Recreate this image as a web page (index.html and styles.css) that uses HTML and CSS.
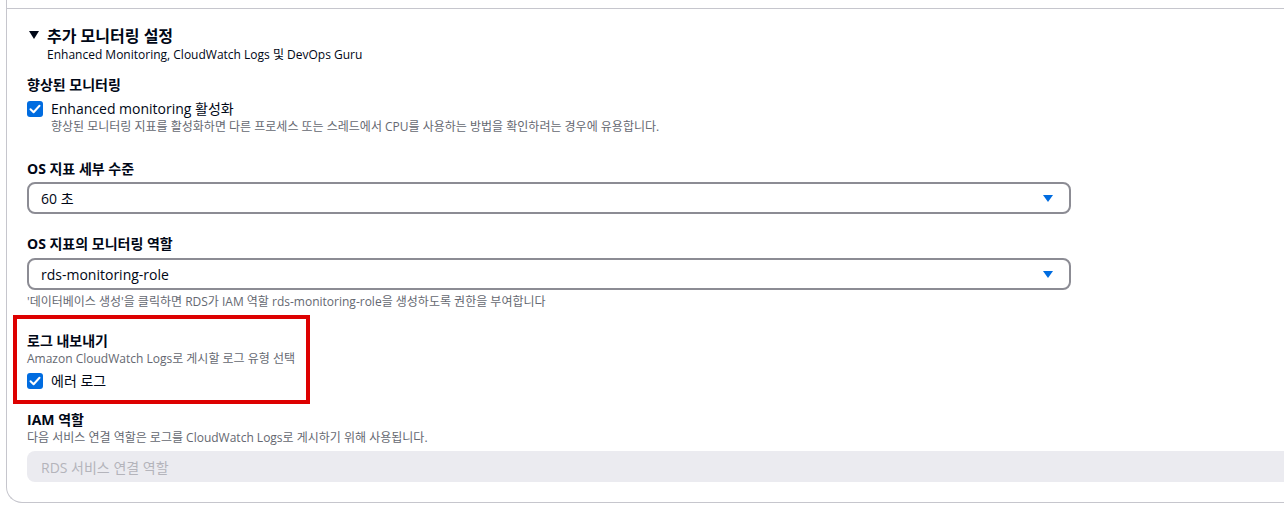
FILE: index.html
```html
<!DOCTYPE html>
<html lang="ko">
<head>
<meta charset="utf-8">
<link rel="stylesheet" href="styles.css">
</head>
<body>
<div class="card">
  <div class="section">
    <div class="exp-header">
      <svg class="exp-caret" width="10" height="8" viewBox="0 0 10 8"><polygon points="0,0 10,0 5,8" fill="#000716"/></svg>
      <div>
        <div class="exp-title">추가 모니터링 설정</div>
        <div class="exp-sub">Enhanced Monitoring, CloudWatch Logs 및 DevOps Guru</div>
      </div>
    </div>

    <div class="field f-enh">
      <div class="label">향상된 모니터링</div>
      <div class="check-row">
        <svg class="cbox" width="16" height="16" viewBox="0 0 16 16"><rect x="0" y="0" width="16" height="16" rx="3" fill="#006ce0"/><polyline points="3.5,8.2 6.6,11.2 12.5,4.8" fill="none" stroke="#fff" stroke-width="2" stroke-linecap="round" stroke-linejoin="round"/></svg>
        <span class="check-label">Enhanced monitoring 활성화</span>
      </div>
      <div class="check-desc">향상된 모니터링 지표를 활성화하면 다른 프로세스 또는 스레드에서 CPU를 사용하는 방법을 확인하려는 경우에 유용합니다.</div>
    </div>

    <div class="field f-gran">
      <div class="label">OS 지표 세부 수준</div>
      <div class="select">
        <span>60 초</span>
        <svg width="10" height="7" viewBox="0 0 10 7"><polygon points="0,0 10,0 5,7" fill="#006ce0"/></svg>
      </div>
    </div>

    <div class="field f-role">
      <div class="label">OS 지표의 모니터링 역할</div>
      <div class="select">
        <span>rds-monitoring-role</span>
        <svg width="10" height="7" viewBox="0 0 10 7"><polygon points="0,0 10,0 5,7" fill="#006ce0"/></svg>
      </div>
      <div class="hint">'데이터베이스 생성'을 클릭하면 RDS가 IAM 역할 rds-monitoring-role을 생성하도록 권한을 부여합니다</div>
    </div>

    <div class="field f-logs">
      <div class="highlight"></div>
      <div class="label">로그 내보내기</div>
      <div class="desc">Amazon CloudWatch Logs로 게시할 로그 유형 선택</div>
      <div class="check-row">
        <svg class="cbox" width="16" height="16" viewBox="0 0 16 16"><rect x="0" y="0" width="16" height="16" rx="3" fill="#006ce0"/><polyline points="3.5,8.2 6.6,11.2 12.5,4.8" fill="none" stroke="#fff" stroke-width="2" stroke-linecap="round" stroke-linejoin="round"/></svg>
        <span class="check-label">에러 로그</span>
      </div>
    </div>

    <div class="field f-iam">
      <div class="label">IAM 역할</div>
      <div class="desc">다음 서비스 연결 역할은 로그를 CloudWatch Logs로 게시하기 위해 사용됩니다.</div>
      <div class="input-disabled">RDS 서비스 연결 역할</div>
    </div>
  </div>
</div>
</body>
</html>
```

FILE: styles.css
```css
html, body {
  margin: 0;
  padding: 0;
  background: #ffffff;
  overflow: hidden;
}
body {
  width: 1284px;
  height: 514px;
  font-family: "Open Sans", "Noto Sans CJK KR", sans-serif;
  color: #000716;
}
.card {
  margin-left: 6px;
  width: 1340px;
  height: 503px;
  border-left: 1px solid #c6c6cd;
  border-bottom: 1px solid #c6c6cd;
  border-bottom-left-radius: 16px;
  box-sizing: border-box;
  padding-top: 8px;
}
.section {
  border-top: 1px solid #c6c6cd;
  padding: 17px 0 0 20px;
  display: flex;
  flex-direction: column;
}
.exp-header {
  display: flex;
  align-items: flex-start;
  gap: 8px;
  padding-left: 2px;
}
.exp-caret {
  margin-top: 5px;
}
.exp-title {
  font-size: 16px;
  font-weight: 700;
  line-height: 21px;
}
.exp-sub {
  font-size: 12px;
  line-height: 16px;
  color: #000716;
}
.label {
  font-size: 14px;
  font-weight: 700;
  line-height: 20px;
}
.desc, .hint, .check-desc {
  font-size: 12px;
  line-height: 16px;
  color: #656871;
}
.check-row {
  display: flex;
  align-items: center;
  gap: 8px;
  height: 20px;
}
.check-label {
  font-size: 14px;
  line-height: 20px;
}
.check-desc {
  padding-left: 24px;
}
.f-enh { margin-top: 12px; }
.f-enh .check-row { margin-top: 4px; }
.f-gran { margin-top: 24px; }
.f-role { margin-top: 20px; }
.select {
  margin-top: 3px;
  width: 1044px;
  height: 32px;
  box-sizing: border-box;
  border: 2px solid #8c8c94;
  border-radius: 8px;
  display: flex;
  align-items: center;
  justify-content: space-between;
  padding: 0 16px 0 12px;
  font-size: 14px;
}
.f-role .select { margin-top: 4px; }
.hint { margin-top: 4px; }
.f-logs {
  position: relative;
  margin-top: 21px;
}
.f-logs .check-row { margin-top: 4px; }
.highlight {
  position: absolute;
  left: -14px;
  top: -16px;
  width: 297px;
  height: 89px;
  box-sizing: border-box;
  border: 4px solid #dd0000;
}
.f-iam { margin-top: 19px; }
.input-disabled {
  margin-top: 5px;
  height: 31px;
  box-sizing: border-box;
  background: #ebebf0;
  border-radius: 8px;
  padding-left: 14px;
  display: flex;
  align-items: center;
  font-size: 14px;
  color: #b4b4bb;
  width: 1400px;
}
```
